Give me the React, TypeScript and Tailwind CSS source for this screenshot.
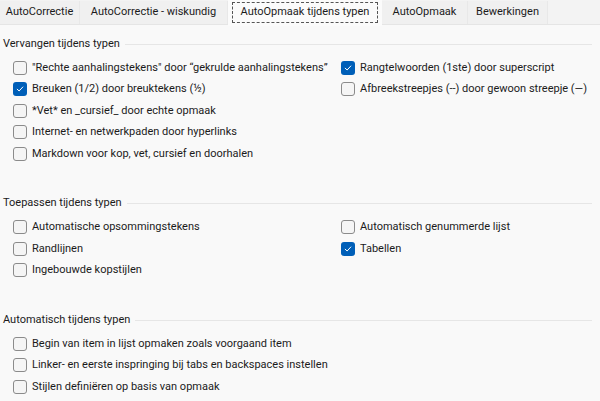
import React from 'react';

interface OptionProps {
  label: string;
  checked?: boolean;
}

const Option: React.FC<OptionProps> = ({ label, checked }) => (
  <div className="flex items-center h-[21.5px]">
    {checked ? (
      <span className="w-[14px] h-[14px] rounded-[3px] bg-[#005fb8] flex items-center justify-center shrink-0">
        <svg width="10" height="10" viewBox="0 0 10 10" fill="none">
          <path d="M2.2 5.2 L4.1 7 L7.8 3" stroke="white" strokeWidth="1" strokeLinecap="round" strokeLinejoin="round" />
        </svg>
      </span>
    ) : (
      <span className="w-[14px] h-[14px] rounded-[3px] border border-[#8b8b8b] bg-[#f5f5f5] shrink-0" />
    )}
    <span className="ml-[5px] whitespace-nowrap">{label}</span>
  </div>
);

const Section: React.FC<{ title: string; children: React.ReactNode }> = ({ title, children }) => (
  <div>
    <div className="flex items-center pl-[3px] pr-[8px] h-[20px]">
      <span className="whitespace-nowrap">{title}</span>
      <div className="flex-1 h-px bg-[#e6e6e6] ml-[5px]" />
    </div>
    <div className="pl-[13px] pt-[3px]">{children}</div>
  </div>
);

const tabs = [
  { t: 'AutoCorrectie', w: 'w-[80px]' },
  { t: 'AutoCorrectie - wiskundig', w: 'w-[148px]' },
  { t: 'AutoOpmaak tijdens typen', w: 'w-[154px]' },
  { t: 'AutoOpmaak', w: 'w-[86px]' },
  { t: 'Bewerkingen', w: 'w-[80px]' },
];

export default function App() {
  return (
    <div
      className="w-[600px] h-[401px] bg-[#f9f9f9] text-[11px] text-[#1b1b1b] overflow-hidden"
      style={{ fontFamily: 'Roboto, "Noto Sans", sans-serif' }}
    >
      <div className="flex h-[25px] bg-[#f3f3f3] border-b border-[#e5e5e5]">
        {tabs.map((tab, i) =>
          i === 2 ? (
            <div key={tab.t} className={`${tab.w} h-[26px] -mb-px bg-[#fbfbfb] px-[4px] pt-[2px] flex`}>
              <div className="flex-1 border border-dashed border-[#555] h-[21px] flex items-center justify-center whitespace-nowrap">
                {tab.t}
              </div>
            </div>
          ) : (
            <div
              key={tab.t}
              className={`${tab.w} flex items-center justify-center whitespace-nowrap border-r border-[#e8e8e8] bg-[#f0f0f0] mt-[1px]`}
            >
              {tab.t}
            </div>
          )
        )}
      </div>

      <div className="pt-[9px]">
        <Section title="Vervangen tijdens typen">
          <div className="grid grid-cols-[328px_1fr]">
            <div>
              <Option label={'"Rechte aanhalingstekens" door “gekrulde aanhalingstekens”'} />
              <Option label="Breuken (1/2) door breuktekens (½)" checked />
              <Option label="*Vet* en _cursief_ door echte opmaak" />
              <Option label="Internet- en netwerkpaden door hyperlinks" />
              <Option label="Markdown voor kop, vet, cursief en doorhalen" />
            </div>
            <div>
              <Option label="Rangtelwoorden (1ste) door superscript" checked />
              <Option label="Afbreekstreepjes (--) door gewoon streepje (—)" />
            </div>
          </div>
        </Section>

        <div className="h-[29px]" />
        <Section title="Toepassen tijdens typen">
          <div className="grid grid-cols-[328px_1fr]">
            <div>
              <Option label="Automatische opsommingstekens" />
              <Option label="Randlijnen" />
              <Option label="Ingebouwde kopstijlen" />
            </div>
            <div>
              <Option label="Automatisch genummerde lijst" />
              <Option label="Tabellen" checked />
            </div>
          </div>
        </Section>

        <div className="h-[29px]" />
        <Section title="Automatisch tijdens typen">
          <Option label="Begin van item in lijst opmaken zoals voorgaand item" />
          <Option label="Linker- en eerste inspringing bij tabs en backspaces instellen" />
          <Option label="Stijlen definiëren op basis van opmaak" />
        </Section>
      </div>
    </div>
  );
}
